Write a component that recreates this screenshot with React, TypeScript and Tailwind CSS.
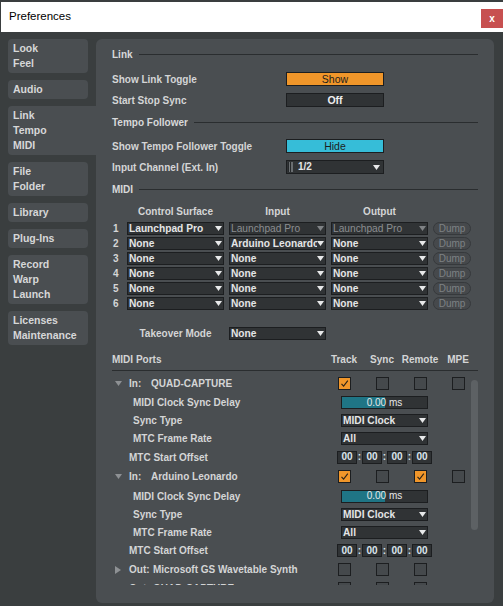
import React from "react";

const FONT = "font-['Liberation_Sans',Arial,sans-serif]";

function Tri({ color = "#e8e9ea", dir = "down" }: { color?: string; dir?: "down" | "right" }) {
  if (dir === "right")
    return (
      <svg width="6" height="8" viewBox="0 0 6 8">
        <polygon points="0,0 6,4 0,8" fill={color} />
      </svg>
    );
  return (
    <svg width="7" height="5" viewBox="0 0 7 5">
      <polygon points="0,0 7,0 3.5,5" fill={color} />
    </svg>
  );
}

function Dropdown({ text, disabled = false, className = "" }: { text: string; disabled?: boolean; className?: string }) {
  return (
    <div className={`flex h-[13px] items-center border border-[#1c1e20] bg-[#303335] ${className}`}>
      <span
        className={`min-w-0 flex-1 overflow-hidden whitespace-nowrap pl-[1px] text-[10.2px] leading-[11px] ${
          disabled ? "font-normal text-[#8b8e91]" : "font-bold text-[#e4e5e6]"
        }`}
      >
        {text}
      </span>
      <span className="mr-[1px] flex shrink-0 items-center">
        <Tri color={disabled ? "#7f8285" : "#e8e9ea"} />
      </span>
    </div>
  );
}

function SectionHeader({ title, className = "" }: { title: string; className?: string }) {
  return (
    <div className={`flex h-[16px] items-center gap-[6px] ${className}`}>
      <span className="text-[10px] font-bold text-[#d8d9da]">{title}</span>
      <div className="h-px flex-1 bg-[#2a2d2f]" />
    </div>
  );
}

function Checkbox({ checked }: { checked: boolean }) {
  if (checked)
    return (
      <div className="flex h-[13px] w-[13px] items-center justify-center border border-[#1c1e20] bg-[#f0962a]">
        <svg width="11" height="11" viewBox="0 0 11 11">
          <path d="M2.5 5.8 L4.6 8.2 L8.8 2.6" fill="none" stroke="#2a2218" strokeWidth="1.1" />
        </svg>
      </div>
    );
  return <div className="h-[13px] w-[13px] border border-[#1c1e20] bg-[#45494c]" />;
}

function CheckCols({ checks }: { checks: (boolean | null)[] }) {
  return (
    <>
      {checks.map((c, i) => (
        <div key={i} className="flex w-[38px] items-center justify-center">
          {c === null ? null : <Checkbox checked={c} />}
        </div>
      ))}
    </>
  );
}

function PortHeader({
  dir,
  name,
  checks,
  expanded,
  h,
}: {
  dir: string;
  name: string;
  checks: (boolean | null)[];
  expanded: boolean;
  h: string;
}) {
  return (
    <div className={`flex items-center ${h}`}>
      <div className="flex w-[213px] items-center text-[10px] font-bold text-[#d4d5d6]">
        <span className="flex w-[17px] items-center pl-[3px]">
          {expanded ? <Tri color="#8e9194" /> : <Tri color="#8e9194" dir="right" />}
        </span>
        <span className={dir === "In:" ? "w-[22px]" : "w-[24px]"}>{dir}</span>
        <span className="whitespace-nowrap">{name}</span>
      </div>
      <CheckCols checks={checks} />
    </div>
  );
}

function SubRow({ label, children }: { label: string; children: React.ReactNode }) {
  return (
    <div className="flex h-[18px] items-center">
      <div className="w-[229px] pl-[21px] text-[10px] font-bold text-[#d4d5d6]">{label}</div>
      {children}
    </div>
  );
}

function TimeBox() {
  return (
    <div className="flex h-[13px] w-[20px] items-center justify-center border border-[#1c1e20] bg-[#303335] text-[10px] font-bold leading-none text-[#dbe4ec]">
      00
    </div>
  );
}

function PortBlock({ dir, name, checks }: { dir: string; name: string; checks: (boolean | null)[] }) {
  return (
    <div>
      <PortHeader dir={dir} name={name} checks={checks} expanded h="h-[20.5px]" />
      <SubRow label="MIDI Clock Sync Delay">
        <div className="relative flex h-[13px] w-[87px] items-center justify-center border border-[#1c1e20] bg-[#303335]">
          <div className="absolute inset-y-0 left-0 w-1/2 bg-[#1f7585]" />
          <span className="relative text-[10px] font-normal leading-none text-[#e6e7e8]">0.00 ms</span>
        </div>
      </SubRow>
      <SubRow label="Sync Type">
        <Dropdown text="MIDI Clock" className="w-[87px]" />
      </SubRow>
      <SubRow label="MTC Frame Rate">
        <Dropdown text="All" className="w-[87px]" />
      </SubRow>
      <div className="flex h-[19px] items-center">
        <div className="w-[225px] pl-[17px] text-[10px] font-bold text-[#d4d5d6]">MTC Start Offset</div>
        <div className="flex items-center">
          <TimeBox />
          <span className="w-[5px] text-center text-[10px] font-bold leading-none text-[#dbe4ec]">:</span>
          <TimeBox />
          <span className="w-[5px] text-center text-[10px] font-bold leading-none text-[#dbe4ec]">:</span>
          <TimeBox />
          <span className="w-[5px] text-center text-[10px] font-bold leading-none text-[#dbe4ec]">:</span>
          <TimeBox />
        </div>
      </div>
    </div>
  );
}

function LinkRow({ label, children, className = "" }: { label: string; children: React.ReactNode; className?: string }) {
  return (
    <div className={`flex h-[14px] items-center ${className}`}>
      <div className="w-[174px] text-[10px] font-bold text-[#d4d5d6]">{label}</div>
      {children}
    </div>
  );
}

const tabs: string[][] = [
  ["Look", "Feel"],
  ["Audio"],
  ["Link", "Tempo", "MIDI"],
  ["File", "Folder"],
  ["Library"],
  ["Plug-Ins"],
  ["Record", "Warp", "Launch"],
  ["Licenses", "Maintenance"],
];

export default function App() {
  const midiRows = [
    { cs: "Launchpad Pro", inp: "Launchpad Pro", out: "Launchpad Pro", dis: true },
    { cs: "None", inp: "Arduino Leonardo", out: "None", dis: false },
    { cs: "None", inp: "None", out: "None", dis: false },
    { cs: "None", inp: "None", out: "None", dis: false },
    { cs: "None", inp: "None", out: "None", dis: false },
    { cs: "None", inp: "None", out: "None", dis: false },
  ];

  return (
    <div className={`flex h-[606px] w-[503px] flex-col overflow-hidden border-t-2 border-l border-[#3a3e3f] bg-[#3a3e3f] ${FONT}`}>
      {/* Title bar */}
      <div className="flex h-[30px] shrink-0 items-center justify-between bg-white">
        <span className="pl-[8px] text-[11.5px] text-black">Preferences</span>
        <div className="mt-[7px] flex h-[19px] w-[22px] items-center justify-center self-start bg-[#c75050] text-[10px] font-bold leading-none text-white">
          x
        </div>
      </div>

      {/* Body */}
      <div className="flex min-h-0 flex-1 pb-[3px] pl-[7px] pr-[9px] pt-[7px]">
        {/* Sidebar */}
        <div className="flex w-[80px] shrink-0 flex-col gap-[7px]">
          {tabs.map((t, i) => {
            const sel = i === 2;
            return (
              <div
                key={i}
                className={`bg-[#4a4e51] py-[2px] pl-[5px] text-[10.5px] font-bold leading-[15px] text-[#d6d7d8] ${
                  sel ? "mr-[-8px] rounded-l-[4px]" : "rounded-[4px]"
                }`}
              >
                {t.map((l) => (
                  <div key={l}>{l}</div>
                ))}
              </div>
            );
          })}
        </div>

        {/* Main panel */}
        <div className="ml-[8px] flex min-w-0 flex-1 flex-col rounded-[6px] bg-[#4a4e51] px-[16px] pt-[7px]">
          <SectionHeader title="Link" />
          <LinkRow label="Show Link Toggle" className="mt-[10px]">
            <div className="flex h-[14px] w-[98px] items-center justify-center border border-[#1c1e20] bg-[#f0962a] text-[10.5px] leading-none text-[#1d1d1d]">
              Show
            </div>
          </LinkRow>
          <LinkRow label="Start Stop Sync" className="mt-[7px]">
            <div className="flex h-[14px] w-[98px] items-center justify-center border border-[#1c1e20] bg-[#303335] text-[10.5px] font-bold leading-none text-[#eeeeee]">
              Off
            </div>
          </LinkRow>
          <SectionHeader title="Tempo Follower" className="mt-[7px]" />
          <LinkRow label="Show Tempo Follower Toggle" className="mt-[9px]">
            <div className="flex h-[14px] w-[98px] items-center justify-center border border-[#1c1e20] bg-[#36bdd8] text-[10.5px] leading-none text-[#1d1d1d]">
              Hide
            </div>
          </LinkRow>
          <LinkRow label="Input Channel (Ext. In)" className="mt-[7px]">
            <div className="flex h-[14px] w-[98px] items-center border border-[#1c1e20] bg-[#303335]">
              <div className="ml-[1px] flex h-[10px] w-[5px] justify-between bg-[#26292b] px-[0.5px]">
                <div className="w-[1.5px] bg-[#6a6e71]" />
                <div className="w-[1.5px] bg-[#6a6e71]" />
              </div>
              <span className="ml-[5px] flex-1 text-[10px] font-bold leading-none text-[#e4e5e6]">1/2</span>
              <span className="mr-[3px] flex items-center">
                <Tri />
              </span>
            </div>
          </LinkRow>
          <SectionHeader title="MIDI" className="mt-[7px]" />

          {/* MIDI table */}
          <div className="mt-[7px] grid grid-cols-[10px_97px_97px_97px_38px] gap-x-[5px] text-[10px] font-bold text-[#d4d5d6]">
            <div className="h-[14px]" />
            <div className="flex h-[14px] items-center justify-center">Control Surface</div>
            <div className="flex h-[14px] items-center justify-center">Input</div>
            <div className="flex h-[14px] items-center justify-center">Output</div>
            <div />
          </div>
          <div className="mt-[4px] grid grid-cols-[10px_97px_97px_97px_38px] gap-x-[5px] gap-y-[2px]">
            {midiRows.map((r, i) => (
              <React.Fragment key={i}>
                <div className="flex h-[13px] items-center pl-[1px] text-[10px] font-bold text-[#d4d5d6]">{i + 1}</div>
                <Dropdown text={r.cs} />
                <Dropdown text={r.inp} disabled={r.dis} />
                <Dropdown text={r.out} disabled={r.dis} />
                <div className="flex h-[13px] items-center justify-center rounded-full border border-[#36393c] bg-[#46494c] text-[10px] leading-none text-[#7d8184]">
                  Dump
                </div>
              </React.Fragment>
            ))}
          </div>
          <div className="mt-[17px] grid grid-cols-[10px_97px_97px_97px_38px] gap-x-[5px]">
            <div />
            <div className="flex h-[13px] items-center justify-center text-[10px] font-bold text-[#d4d5d6]">Takeover Mode</div>
            <Dropdown text="None" />
            <div />
            <div />
          </div>

          {/* MIDI Ports */}
          <div className="mt-[10px] h-[21px] border-b border-[#2a2d2f]">
            <div className="flex h-[20px] items-center pb-[2px] text-[10px] font-bold text-[#d4d5d6]">
              <div className="w-[213px]">MIDI Ports</div>
              <div className="w-[38px] text-center">Track</div>
              <div className="w-[38px] text-center">Sync</div>
              <div className="w-[38px] text-center">Remote</div>
              <div className="w-[38px] text-center">MPE</div>
            </div>
          </div>
          <div className="relative h-[214px] overflow-hidden pt-[2px]">
            <PortBlock dir="In:" name="QUAD-CAPTURE" checks={[true, false, false, false]} />
            <PortBlock dir="In:" name="Arduino Leonardo" checks={[true, false, true, false]} />
            <PortHeader dir="Out:" name="Microsoft GS Wavetable Synth" checks={[false, false, false, null]} expanded={false} h="h-[19px]" />
            <PortHeader dir="Out:" name="QUAD-CAPTURE" checks={[false, false, false, null]} expanded={false} h="h-[19px]" />
            <div className="absolute right-0 top-[9px] h-[150px] w-[7px] rounded-full bg-[#5d6164]" />
          </div>
        </div>
      </div>
    </div>
  );
}
